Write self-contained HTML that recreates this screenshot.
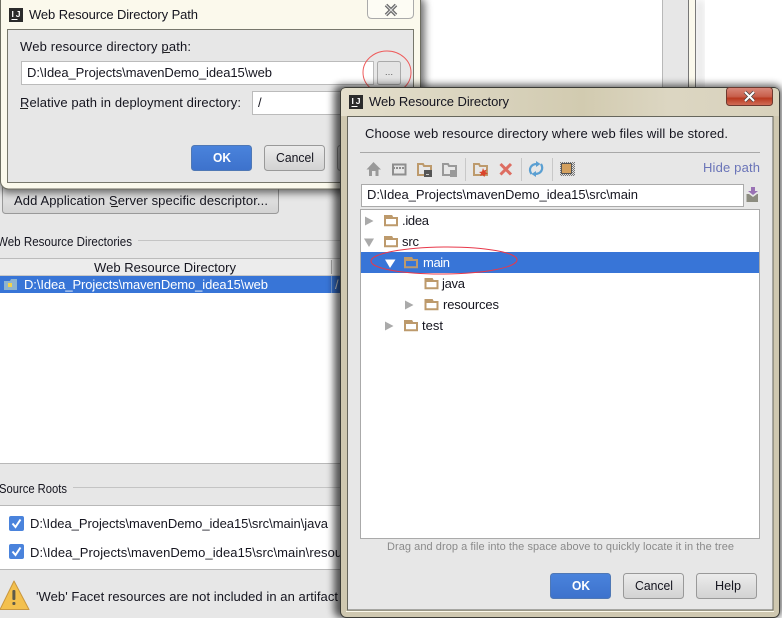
<!DOCTYPE html>
<html><head><meta charset="utf-8"><style>
html,body{margin:0;padding:0;background:#fff}
svg{display:block}
text{font-family:"Liberation Sans",sans-serif;font-size:13px;fill:#15151f}
</style></head><body>
<svg width="782" height="618" viewBox="0 0 782 618" xmlns="http://www.w3.org/2000/svg">
<defs>
<filter id="sh" x="-10%" y="-10%" width="120%" height="120%"><feGaussianBlur stdDeviation="4"/></filter>
<linearGradient id="btn" x1="0" y1="0" x2="0" y2="1"><stop offset="0" stop-color="#ececec"/><stop offset="1" stop-color="#d2d2d2"/></linearGradient>
<linearGradient id="blue" x1="0" y1="0" x2="0" y2="1"><stop offset="0" stop-color="#4a83dc"/><stop offset="1" stop-color="#3d72cc"/></linearGradient>
<linearGradient id="red" x1="0" y1="0" x2="0" y2="1"><stop offset="0" stop-color="#d98a7c"/><stop offset=".5" stop-color="#c8604c"/><stop offset=".6" stop-color="#b93a20"/><stop offset="1" stop-color="#d2705a"/></linearGradient>
<linearGradient id="tb" x1="0" y1="0" x2="1" y2="0"><stop offset="0" stop-color="#e4dfcc"/><stop offset=".35" stop-color="#d8d2bc"/><stop offset=".55" stop-color="#d2cbb0"/><stop offset=".75" stop-color="#dcd6c2"/><stop offset="1" stop-color="#d8d2bc"/></linearGradient>
<pattern id="dith" width="2" height="2" patternUnits="userSpaceOnUse"><rect width="2" height="2" fill="#ddd"/><rect width="1" height="1" fill="#777"/><rect x="1" y="1" width="1" height="1" fill="#777"/></pattern>
<g id="folder"><path d="M1 1H7.500L8.500 3H13V10.200H1Z" fill="none" stroke="#bd9a6c" stroke-width="2"/><path d="M1 3H13" stroke="#bd9a6c" stroke-width="2"/></g>
<g id="ij"><rect width="14" height="14" fill="#2b2b2b"/><text x="2.500" y="9" textLength="9" style="font-size:8.500px;font-weight:bold;fill:#fff">IJ</text><rect x="2.500" y="11" width="6" height="1" fill="#fff"/></g>
</defs>

<!-- background window -->
<rect width="782" height="618" fill="#fff"/>
<rect x="0" y="0" width="345" height="618" fill="#e7e7e7"/>
<rect x="662" y="0" width="27" height="90" fill="#e7e7e7"/>
<rect x="662" y="0" width="1" height="90" fill="#b8b8b8"/>
<rect x="689" y="0" width="7" height="90" fill="#fbf9ec"/>
<rect x="688" y="0" width="1" height="90" fill="#777"/>
<rect x="695" y="0" width="1" height="90" fill="#777"/>
<rect x="696" y="0" width="8" height="90" fill="#999" opacity=".25" filter="url(#sh)"/>

<!-- add button -->
<rect x="2.500" y="185" width="276" height="28.500" rx="3" fill="url(#btn)" stroke="#999"/>
<text x="14" y="205" textLength="254">Add Application Server specific descriptor...</text>
<rect x="111" y="206" width="7" height="1" fill="#222"/>

<!-- web resource directories -->
<text x="-3" y="246" textLength="135" lengthAdjust="spacingAndGlyphs">Web Resource Directories</text>
<rect x="138" y="240" width="205" height="1" fill="#c4c4c4"/>
<rect x="0" y="258" width="345" height="1" fill="#bbb"/>
<rect x="0" y="259" width="345" height="16" fill="#ececec"/>
<rect x="0" y="275" width="345" height="1" fill="#c8c8c8"/>
<text x="94" y="272" textLength="142">Web Resource Directory</text>
<rect x="331" y="260" width="1" height="14" fill="#aaa"/>
<rect x="0" y="276" width="345" height="17" fill="#3875d7"/>
<rect x="331" y="276" width="1" height="17" fill="#7aa3e3"/>
<path d="M4 281H10L11 279H17V290H4Z" fill="#8eb4cf"/><rect x="8" y="283" width="4" height="4" fill="#f2d24a"/>
<text x="24" y="289" textLength="244" style="fill:#fff">D:\Idea_Projects\mavenDemo_idea15\web</text>
<text x="335" y="289" style="fill:#fff">/</text>
<rect x="0" y="293" width="345" height="170" fill="#fff"/>
<rect x="0" y="463" width="345" height="1" fill="#b8b8b8"/>

<!-- source roots -->
<text x="-1" y="493" textLength="68" lengthAdjust="spacingAndGlyphs">Source Roots</text>
<rect x="73" y="487" width="270" height="1" fill="#c4c4c4"/>
<rect x="0" y="505" width="345" height="1" fill="#b8b8b8"/>
<rect x="0" y="506" width="345" height="63" fill="#fff"/>
<rect x="0" y="569" width="345" height="1" fill="#b8b8b8"/>
<rect x="9" y="516" width="15" height="15" rx="2" fill="#4a83dc"/>
<path d="M12.500 523.500L15.500 527L20.500 519.500" fill="none" stroke="#fff" stroke-width="2"/>
<rect x="9" y="544" width="15" height="15" rx="2" fill="#4a83dc"/>
<path d="M12.500 551.500L15.500 555L20.500 547.500" fill="none" stroke="#fff" stroke-width="2"/>
<text x="30" y="528" textLength="298">D:\Idea_Projects\mavenDemo_idea15\src\main\java</text>
<text x="30" y="557" textLength="337">D:\Idea_Projects\mavenDemo_idea15\src\main\resources</text>

<!-- warning -->
<path d="M14 581L29 609.500H0Z" fill="#f3c04e" stroke="#c9973f" stroke-linejoin="round"/>
<rect x="12.400" y="590" width="3" height="10" rx="1" fill="#5d5a4a"/><rect x="12.400" y="602" width="3" height="3" rx="1" fill="#5d5a4a"/>
<text x="36" y="601" textLength="302">'Web' Facet resources are not included in an artifact</text>

<!-- dialog 1 -->
<rect x="0" y="-3" width="425" height="196" rx="8" fill="#000" opacity=".55" filter="url(#sh)"/>
<rect x="0.500" y="-8" width="420" height="197" rx="8" fill="#fbf9ec" stroke="#6c6c60"/>
<path d="M367.500 0V14Q367.500 18.500 372 18.500H408.500Q413.500 18.500 413.500 14V0" fill="#fdfcf4" stroke="#aaa"/>
<path d="M386 5L396 15M396 5L386 15" stroke="#666" stroke-width="3.500"/>
<path d="M386 5L396 15M396 5L386 15" stroke="#ddd" stroke-width="1.200"/>
<use href="#ij" x="9" y="8"/>
<text x="29" y="19" textLength="169">Web Resource Directory Path</text>
<rect x="7.500" y="29.500" width="406" height="153" fill="#e7e7e7" stroke="#77776c"/>
<text x="20" y="51" textLength="171">Web resource directory path:</text>
<rect x="163" y="52" width="7" height="1" fill="#222"/>
<rect x="21.500" y="61.500" width="352" height="23" fill="#fff" stroke="#bbb"/>
<text x="27" y="77" textLength="245">D:\Idea_Projects\mavenDemo_idea15\web</text>
<rect x="377.500" y="61.500" width="23" height="23" rx="2" fill="#e4e4e4" stroke="#aaa"/>
<text x="385" y="75" style="font-size:9px;fill:#555" textLength="8">...</text>
<text x="20" y="107" textLength="221">Relative path in deployment directory:</text>
<rect x="20" y="108" width="8" height="1" fill="#222"/>
<rect x="252.500" y="91.500" width="130" height="23" fill="#fff" stroke="#bbb"/>
<text x="258" y="107">/</text>
<rect x="191.500" y="145.500" width="60" height="25" rx="3" fill="url(#blue)" stroke="#4f78b5"/>
<text x="213" y="162" textLength="18" lengthAdjust="spacingAndGlyphs" style="font-weight:bold;fill:#fff">OK</text>
<rect x="264.500" y="145.500" width="60" height="25" rx="3" fill="url(#btn)" stroke="#999"/>
<text x="276" y="162" textLength="38" lengthAdjust="spacingAndGlyphs">Cancel</text>
<rect x="337.500" y="145.500" width="30" height="25" rx="3" fill="url(#btn)" stroke="#999"/>

<!-- circle -->
<ellipse cx="387" cy="72.500" rx="24" ry="21.500" fill="none" stroke="#ee5a5a"/>

<!-- dialog 2 -->
<rect x="334" y="85" width="448" height="533" rx="8" fill="#000" opacity=".65" filter="url(#sh)"/>
<rect x="340.500" y="87.500" width="439" height="530" rx="6" fill="#cfc8b0" stroke="#3c3c36"/>
<path d="M341 110V93Q341 88 346 88H774Q779 88 779 93V116H341Z" fill="url(#tb)"/>
<rect x="726.500" y="87.500" width="46" height="18" rx="3" fill="url(#red)" stroke="#6e3a30"/>
<path d="M745 92L754 101M754 92L745 101" stroke="#444" stroke-width="3.400"/>
<path d="M745 92L754 101M754 92L745 101" stroke="#fff" stroke-width="2"/>
<use href="#ij" x="349" y="95"/>
<text x="369" y="106" textLength="140">Web Resource Directory</text>
<rect x="347.500" y="116.500" width="425.500" height="493.500" fill="#e7e7e7" stroke="#66665c"/>
<rect x="346" y="611" width="428" height="1" fill="#fbf9ec"/>
<text x="365" y="138" textLength="363">Choose web resource directory where web files will be stored.</text>
<rect x="360" y="152" width="400" height="1" fill="#a8a8a8"/>

<!-- toolbar -->
<path d="M373.500 162L366.500 169.500H369V176H372V171H375.500V176H378.500V169.500H381Z" fill="#999"/>
<path d="M393 164.500H405.500V174.500H393Z" fill="none" stroke="#8e8e8e" stroke-width="2"/><path d="M393 168H405" stroke="#8e8e8e" stroke-width="2" stroke-dasharray="2 1"/>
<path d="M418 164H423L424 166H431V175H418Z" fill="none" stroke="#bd9a6c" stroke-width="2"/><rect x="424" y="170" width="8" height="7" fill="#555"/><rect x="426" y="174" width="3" height="1" fill="#ccc"/>
<path d="M443 164H448L449 166H456V175H443Z" fill="none" stroke="#999" stroke-width="2"/><rect x="450" y="170" width="7" height="7" fill="#999"/>
<rect x="465" y="158" width="1" height="23" fill="#c8c8c8"/>
<path d="M474 164H479L480 166H487V175H474Z" fill="none" stroke="#bd9a6c" stroke-width="2"/><path d="M483 168L484 170.500L487 169.500L485.500 172L488 174L485 174.500L484.500 177L482.500 175L480 176L481 173.500L479 172L482 171.500Z" fill="#d9432a"/>
<path d="M500.500 164L511 174.500M511 164L500.500 174.500" stroke="#dd6d61" stroke-width="3"/>
<rect x="521" y="158" width="1" height="23" fill="#c8c8c8"/>
<path d="M531.500 174C528 169 531 164 537 164M541 164C544 169 541 174 535 174" fill="none" stroke="#5a9fd2" stroke-width="2.200"/><path d="M536 161V167L540.500 164ZM536 171V177L531.500 174Z" fill="#5a9fd2"/>
<rect x="552" y="158" width="1" height="23" fill="#c8c8c8"/>
<rect x="560" y="162" width="15" height="14" fill="url(#dith)"/><rect x="561.500" y="163.500" width="10" height="10" fill="#d3a05f" stroke="#555"/>
<text x="703" y="172" textLength="57" style="fill:#6a74b8">Hide path</text>

<!-- path field -->
<rect x="361.500" y="184.500" width="382" height="22" fill="#fff" stroke="#aaa"/>
<text x="367" y="199" textLength="271">D:\Idea_Projects\mavenDemo_idea15\src\main</text>
<path d="M751 187H755V191H758L753 195L748 191H751Z" fill="#9a72b5"/>
<path d="M746.500 194H749L753 197L757 194H758V202H746.500Z" fill="#8c8c80"/>

<!-- tree -->
<rect x="360.500" y="209.500" width="399" height="329" fill="#fff" stroke="#aaa"/>
<rect x="361" y="252" width="398" height="21" fill="#3875d7"/>
<path d="M365 216.500L373.500 221L365 225.500Z" fill="#aaa"/>
<path d="M364 238.500H374L369 247Z" fill="#aaa"/>
<path d="M385 259.500H395.500L390 268Z" fill="#fff"/>
<path d="M405 300.500L413.500 305L405 309.500Z" fill="#aaa"/>
<path d="M385 321.500L393.500 326L385 330.500Z" fill="#aaa"/>
<use href="#folder" x="384" y="215"/>
<use href="#folder" x="384" y="236"/>
<use href="#folder" x="404" y="257"/>
<use href="#folder" x="424.500" y="278"/>
<use href="#folder" x="424.500" y="299"/>
<use href="#folder" x="404" y="320"/>
<text x="402" y="225" textLength="27">.idea</text>
<text x="402" y="246" textLength="17">src</text>
<text x="423" y="267" textLength="27" style="fill:#fff">main</text>
<text x="442" y="288" textLength="23">java</text>
<text x="443" y="309" textLength="56">resources</text>
<text x="422" y="330" textLength="21">test</text>
<ellipse cx="444" cy="260.500" rx="73" ry="13.500" fill="none" stroke="#e8384a" transform="rotate(-0.500 444 260.500)"/>

<text x="387" y="550" textLength="347" style="font-size:11px;fill:#8a8a8a">Drag and drop a file into the space above to quickly locate it in the tree</text>

<rect x="550.500" y="573.500" width="60" height="25" rx="3" fill="url(#blue)" stroke="#4f78b5"/>
<text x="572" y="590" textLength="18" lengthAdjust="spacingAndGlyphs" style="font-weight:bold;fill:#fff">OK</text>
<rect x="623.500" y="573.500" width="60" height="25" rx="3" fill="url(#btn)" stroke="#999"/>
<text x="635" y="590" textLength="38" lengthAdjust="spacingAndGlyphs">Cancel</text>
<rect x="696.500" y="573.500" width="60" height="25" rx="3" fill="url(#btn)" stroke="#999"/>
<text x="715" y="590" textLength="26" lengthAdjust="spacingAndGlyphs">Help</text>
</svg>
</body></html>
